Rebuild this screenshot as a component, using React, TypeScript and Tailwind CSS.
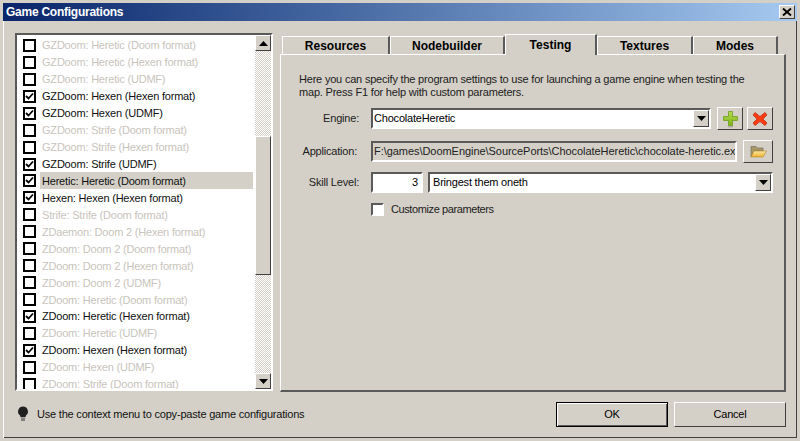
import React from "react";

const rows: [string, boolean][] = [
  ["GZDoom: Heretic (Doom format)", false],
  ["GZDoom: Heretic (Hexen format)", false],
  ["GZDoom: Heretic (UDMF)", false],
  ["GZDoom: Hexen (Hexen format)", true],
  ["GZDoom: Hexen (UDMF)", true],
  ["GZDoom: Strife (Doom format)", false],
  ["GZDoom: Strife (Hexen format)", false],
  ["GZDoom: Strife (UDMF)", true],
  ["Heretic: Heretic (Doom format)", true],
  ["Hexen: Hexen (Hexen format)", true],
  ["Strife: Strife (Doom format)", false],
  ["ZDaemon: Doom 2 (Hexen format)", false],
  ["ZDoom: Doom 2 (Doom format)", false],
  ["ZDoom: Doom 2 (Hexen format)", false],
  ["ZDoom: Doom 2 (UDMF)", false],
  ["ZDoom: Heretic (Doom format)", false],
  ["ZDoom: Heretic (Hexen format)", true],
  ["ZDoom: Heretic (UDMF)", false],
  ["ZDoom: Hexen (Hexen format)", true],
  ["ZDoom: Hexen (UDMF)", false],
  ["ZDoom: Strife (Doom format)", false],
];

const raised =
  "border border-t-white border-l-white border-r-[#404040] border-b-[#404040] bg-[#d4d0c8]";
const sunken =
  "border-2 border-t-[#5a5a5a] border-l-[#5a5a5a] border-r-white border-b-white";

const Arrow = ({ up = false }: { up?: boolean }) => (
  <svg width="9" height="5" viewBox="0 0 9 5">
    <path d={up ? "M4.5 0L9 5H0z" : "M0 0h9L4.5 5z"} fill="#000" />
  </svg>
);

const ScrollButton = ({ up = false }: { up?: boolean }) => (
  <div className={`flex h-[16px] w-[16px] items-center justify-center ${raised}`}>
    <Arrow up={up} />
  </div>
);

const Check = ({ on, thick = true }: { on: boolean; thick?: boolean }) => (
  <div
    className={`flex h-[13px] w-[13px] shrink-0 items-center justify-center bg-white ${
      thick ? "border-2 border-black" : sunken
    }`}
  >
    {on && (
      <svg width="9" height="9" viewBox="0 0 9 9">
        <path d="M1 4l2.5 2.5L8 1.5" fill="none" stroke="#000" strokeWidth="1.8" />
      </svg>
    )}
  </div>
);

const Row = ({ label, on, selected }: { label: string; on: boolean; selected: boolean }) => (
  <div className="flex h-[16.95px] items-center pl-[6px] pr-[2px]">
    <Check on={on} />
    <div
      className={`ml-[4px] flex h-[17px] flex-1 items-center pl-[2px] pt-[1px] ${
        selected ? "bg-[#d4d0c8]" : ""
      } ${on ? "text-[#101010]" : "text-[#c8c4bc]"}`}
    >
      {label}
    </div>
  </div>
);

const Tab = ({ label, width, active }: { label: string; width: string; active?: boolean }) => (
  <div
    className={`flex items-center justify-center border-t border-l border-r-2 border-t-white border-l-white border-r-[#5a5a5a] bg-[#d4d0c8] text-[12px] font-bold tracking-normal ${width} ${
      active ? "relative z-10 -mb-[1px] h-[21px] pb-[1px]" : "h-[18px]"
    }`}
  >
    {label}
  </div>
);

const Label = ({ children, pad = "pr-[12px]" }: { children: React.ReactNode; pad?: string }) => (
  <div className={`w-[90px] shrink-0 text-right text-[#202020] ${pad}`}>{children}</div>
);

const ToolButton = ({ children, className }: { children: React.ReactNode; className: string }) => (
  <div className={`flex items-center justify-center border border-t-white border-l-white border-r-[#404040] border-b-[#404040] ${className}`}>
    {children}
  </div>
);

export default function App() {
  return (
    <div
      className="flex h-[441px] w-[800px] flex-col overflow-hidden border-[3px] border-[#d4d0c8] bg-[#d4d0c8] text-[11px] leading-none tracking-[-0.2px] text-black shadow-[inset_1px_1px_0_#fff,inset_-1px_-1px_0_#404040]"
      style={{ fontFamily: '"Liberation Sans", sans-serif' }}
    >
      {/* title bar */}
      <div className="flex h-[18px] items-center justify-between bg-gradient-to-r from-[#0a246a] to-[#a6caf0] pl-[3px] pr-[2px] text-[12px] font-bold tracking-[-0.25px] text-white">
        <span>Game Configurations</span>
        <div className={`flex h-[14px] w-[16px] items-center justify-center ${raised}`}>
          <svg width="10" height="8" viewBox="0 0 10 8">
            <path d="M1 0.5L9 7.5M9 0.5L1 7.5" stroke="#000" strokeWidth="1.9" />
          </svg>
        </div>
      </div>

      <div className="flex pl-[12px] pt-[12px]">
        {/* game list */}
        <div className={`flex h-[358px] w-[258px] shrink-0 overflow-hidden bg-white ${sunken}`}>
          <div className="flex-1 overflow-hidden pt-[2px]">
            {rows.map(([label, on], i) => (
              <Row key={i} label={label} on={on} selected={i === 8} />
            ))}
          </div>
          <div
            className="flex w-[16px] shrink-0 flex-col"
            style={{
              backgroundImage: "repeating-conic-gradient(#d4d0c8 0 25%, #fff 0 50%)",
              backgroundSize: "2px 2px",
            }}
          >
            <ScrollButton up />
            <div className="h-[85px]" />
            <div className={`h-[139px] ${raised}`} />
            <div className="flex-1" />
            <ScrollButton />
          </div>
        </div>

        {/* settings */}
        <div className="ml-[7px] mt-[1px] w-[506px]">
          <div className="flex h-[20px] items-end pl-[2px]">
            <Tab label="Resources" width="w-[108px]" />
            <Tab label="Nodebuilder" width="w-[115px]" />
            <Tab label="Testing" width="w-[92px]" active />
            <Tab label="Textures" width="w-[96px]" />
            <Tab label="Modes" width="w-[85px]" />
          </div>
          <div className="h-[338px] border-t border-l border-r-2 border-b-2 border-t-white border-l-white border-r-[#5a5a5a] border-b-[#5a5a5a] pt-[18px]">
            <p className="pl-[18px] leading-[13px] text-[#202020]">
              Here you can specify the program settings to use for launching a game engine when testing the
              <br />
              map. Press F1 for help with custom parameters.
            </p>

            <div className="mt-[8px] flex items-center">
              <Label>Engine:</Label>
              <div className={`flex h-[21px] w-[340px] items-center bg-white pl-[1px] ${sunken}`}>
                <span className="flex-1">ChocolateHeretic</span>
                <div className={`flex h-[17px] w-[16px] items-center justify-center ${raised}`}>
                  <Arrow />
                </div>
              </div>
              <ToolButton className="ml-[6px] h-[23px] w-[26px]">
                <svg width="17" height="18" viewBox="0 0 17 18">
                  <defs>
                    <linearGradient id="plus" x1="0" y1="0" x2="0" y2="1">
                      <stop offset="0" stopColor="#b4dc50" />
                      <stop offset="1" stopColor="#7cb414" />
                    </linearGradient>
                  </defs>
                  <path d="M6.5 1.5h4v5h5v4h-5v5h-4v-5h-5v-4h5z" fill="url(#plus)" stroke="#6f9c1c" strokeWidth="0.8" />
                  <path d="M6 16.8h5" stroke="#a09c94" strokeWidth="1" />
                </svg>
              </ToolButton>
              <ToolButton className="ml-[4px] h-[23px] w-[26px]">
                <svg width="16" height="16" viewBox="0 0 16 16">
                  <path d="M3 1.5L8 5.5l5-4 2 2.5L11 8l4 4-2 2.5L8 10.5l-5 4-2-2.5L5 8 1 4z" fill="#fa3c14" stroke="#c02808" strokeWidth="0.7" />
                </svg>
              </ToolButton>
            </div>

            <div className="mt-[10px] flex items-center">
              <Label pad="pr-[14px]">Application:</Label>
              <div className={`flex h-[21px] w-[366px] items-center overflow-hidden whitespace-nowrap pl-[1px] tracking-[-0.05px] text-[#202020] ${sunken}`}>
                F:\games\DoomEngine\SourcePorts\ChocolateHeretic\chocolate-heretic.ex
              </div>
              <ToolButton className="ml-[6px] h-[23px] w-[30px]">
                <svg width="17" height="13" viewBox="0 0 17 13">
                  <path d="M1 1.5h5l1 1.5h6V6H4L1 12z" fill="#a89868" stroke="#787058" strokeWidth="0.7" />
                  <defs>
                    <linearGradient id="folder" x1="0" y1="0" x2="0" y2="1">
                      <stop offset="0" stopColor="#fce8a0" />
                      <stop offset="1" stopColor="#f0b030" />
                    </linearGradient>
                  </defs>
                  <path d="M4 6h12.5l-3.5 6H1z" fill="url(#folder)" stroke="#b08828" strokeWidth="0.6" />
                </svg>
              </ToolButton>
            </div>

            <div className="mt-[9px] flex items-center">
              <Label>Skill Level:</Label>
              <div className={`flex h-[21px] w-[52px] items-center justify-end bg-white pr-[3px] ${sunken}`}>3</div>
              <div className={`ml-[5px] flex h-[21px] w-[345px] items-center bg-white pl-[3px] ${sunken}`}>
                <span className="flex-1">Bringest them oneth</span>
                <div className={`flex h-[17px] w-[16px] items-center justify-center ${raised}`}>
                  <Arrow />
                </div>
              </div>
            </div>

            <div className="ml-[90px] mt-[10px] flex items-center">
              <Check on={false} thick={false} />
              <span className="ml-[7px] tracking-[-0.4px] text-[#202020]">Customize parameters</span>
            </div>
          </div>
        </div>
      </div>

      {/* footer */}
      <div className="flex flex-1 items-center pb-[2px] pl-[14px] pr-[11px]">
        <svg width="12" height="16" viewBox="0 0 12 16">
          <path d="M6 0.5a5 5 0 0 0-3.4 8.6c.7.7.9 1.3.9 2.1h5c0-.8.2-1.4.9-2.1A5 5 0 0 0 6 0.5z" fill="#202020" />
          <path d="M4 12h4v3H4z" fill="#808080" />
        </svg>
        <span className="ml-[8px] flex-1 text-[#101010]">Use the context menu to copy-paste game configurations</span>
        <div className="flex h-[25px] w-[112px] items-center justify-center border border-black bg-[#d4d0c8] shadow-[inset_1px_1px_0_#fff,inset_-1px_-1px_0_#5a5a5a]">OK</div>
        <div className={`ml-[6px] flex h-[25px] w-[112px] items-center justify-center ${raised}`}>Cancel</div>
      </div>
    </div>
  );
}
